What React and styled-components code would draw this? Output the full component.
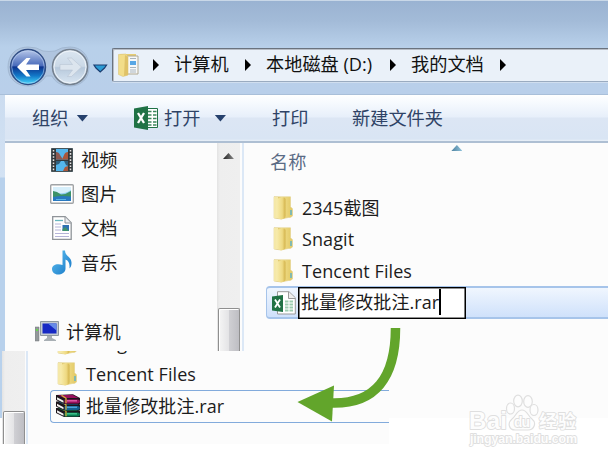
import { Fragment } from "react";
import styled, { createGlobalStyle } from "styled-components";

const GlobalStyle = createGlobalStyle`
  * {
    box-sizing: border-box;
  }

  body {
    margin: 0;
    background: #fff;
    overflow: hidden;
    font-family: "Open Sans", "Noto Sans CJK SC", sans-serif;
    font-size: 18px;
    color: #1c1c1c;
  }

  svg {
    display: block;
    flex: none;
  }
`;

const Page = styled.div`
  position: relative;
  width: 612px;
  height: 461px;
`;

const Window = styled.div`
  display: flex;
  flex-direction: column;
  width: 608px;
  height: 418px;
  background: #b9cfea;
  overflow: hidden;
`;

const NavBar = styled.div`
  display: flex;
  height: 95px;
  padding-top: 48px;
  border-top: 1px solid #c9d8e8;
  border-bottom: 1px solid #a9bfd9;
  background: linear-gradient(#9ab3d2, #a3bbd8 20px, #b8d0ea 46px, #b9cfea);
`;

const NavButtons = styled.div`
  width: 112px;
  margin-top: -4px;
`;

const AddressBar = styled.div`
  flex: 1;
  display: flex;
  align-items: center;
  height: 34px;
  margin-top: -1px;
  padding-left: 5px;
  border: 1px solid #6a737f;
  border-bottom-color: #9aabc0;
  border-right: 0;
  border-radius: 2px 0 0 2px;
  box-shadow: inset 1px 1px #b7bdc6, 0 1px #d0deef;
  background: #eaf1f9;

  svg {
    margin-right: 14px;
  }
`;

const Crumb = styled.span`
  width: ${({ $width }) => $width}px;
  margin: 0 16px 2px 15px;
  line-height: 28px;
  white-space: nowrap;
  font-size: 18.2px;
  color: #111;
`;

const Arrow = styled.i`
  flex: none;
  width: 6px;
  height: 12px;
  background: #000;
  clip-path: polygon(0 0, 100% 50%, 0 100%);
`;

const Body = styled.div`
  flex: 1;
  display: flex;
  flex-direction: column;
  padding-left: 5px;
  background: linear-gradient(
    90deg,
    transparent 5px,
    #fcfcfc 5px
  ), linear-gradient(#cbdcf0, #d3e2f3 82px, #b8d1ec 83px);
`;

const Toolbar = styled.div`
  display: flex;
  align-items: center;
  height: 48px;
  padding-left: 27px;
  border-bottom: 2px solid #aebfd3;
  background: linear-gradient(#fff, #f6fafe 8px, #e7effa 22px, #dce6f4 23px, #d9e5f4 44px, #e9f0f8);
`;

const Command = styled.div`
  display: flex;
  align-items: center;
  width: ${({ $width }) => $width}px;
  line-height: 28px;
  white-space: nowrap;
  font-size: 18.2px;
  color: #2f4366;

  svg {
    margin-right: 6px;
  }
`;

const Caret = styled.i`
  width: 12px;
  height: 7px;
  margin-left: ${({ $gap }) => $gap}px;
  background: #26416d;
  clip-path: polygon(0 0, 100% 0, 50% 100%);
`;

const Panes = styled.div`
  flex: 1;
  display: flex;
`;

const Tree = styled.div`
  flex: 1;
`;

const Sidebar = styled.div`
  display: flex;
  width: 239px;
  height: 208px;
  border-right: 2px solid #dce8f6;
`;

const TreeItem = styled.div`
  display: flex;
  align-items: center;
  gap: 7px;
  height: 34.2px;
  padding-left: 45px;
  line-height: 30px;
  font-size: 18.2px;
`;

const TreeRoot = styled(TreeItem)`
  margin-top: 35px;
  padding-left: 30px;
`;

const ScrollTrack = styled.div`
  display: flex;
  flex-direction: column;
  justify-content: space-between;
  align-items: center;
  width: 23px;
  margin-right: ${({ $gap }) => $gap}px;
  padding-top: 10px;
  background: linear-gradient(90deg, #e3e3e3, #eee 3px, #efefef);
`;

const ScrollUp = styled.i`
  width: 11px;
  height: 6px;
  background: linear-gradient(90deg, #222, #888);
  clip-path: polygon(50% 0, 100% 100%, 0 100%);
`;

const Thumb = styled.div`
  width: 22px;
  height: ${({ $height }) => $height}px;
  border: 1px solid #8f8f8f;
  border-bottom: 0;
  border-radius: 2px 2px 0 0;
  box-shadow: inset 1px 1px #fff;
  background: linear-gradient(90deg, #f5f5f5, #e4e4e6 48%, #cfcfd3 52%, #bebec3);
`;

const Files = styled.div`
  flex: 1;
  padding-left: 22px;
`;

const ColumnHeader = styled.div`
  display: flex;
  align-items: flex-start;
  height: 49px;
  padding-left: 4px;
  line-height: 39px;
  font-size: 18.2px;
  color: #5a6b85;
`;

const SortMark = styled.i`
  width: 11px;
  height: 6px;
  margin: 2px 0 0 145px;
  background: linear-gradient(90deg, #4b7f9d, #8fc1da);
  clip-path: polygon(50% 0, 100% 100%, 0 100%);
`;

const FileRow = styled.div`
  display: flex;
  align-items: center;
  gap: 9px;
  height: 31.5px;
  padding-left: 7px;
  line-height: 30px;
  letter-spacing: 0.08px;
  white-space: nowrap;
`;

const SelectedRow = styled(FileRow)`
  gap: 2px;
  height: 33px;
  margin-top: -0.5px;
  padding-left: 5px;
  border: 1px solid #a6c4ea;
  border-width: 2px 0 2px 1px;
  border-radius: 4px 0 0 4px;
  background: linear-gradient(#f0f6fe, #cfe1fb);
`;

const RenameBox = styled.div`
  display: flex;
  align-items: center;
  width: 168px;
  height: 32px;
  padding: 0 0 2px 2px;
  border: 1px solid #000;
  box-shadow: inset 0 0 0 0.6px #222;
  background: #fff;
`;

const TextCursor = styled.i`
  width: 1.5px;
  height: 26px;
  background: #000;
`;

const Inset = styled.div`
  position: absolute;
  left: 2px;
  top: 351px;
  display: flex;
  width: 387px;
  height: 93px;
  overflow: hidden;
  background: #fcfcfc;
`;

const InsetFiles = styled.div`
  flex: 1;
  display: flex;
  flex-direction: column;
  padding-left: 22px;
  border-left: 2px solid #dce8f6;

  > div {
    flex: none;
  }
`;

const ClippedRow = styled(FileRow)`
  margin-top: -24px;
`;

const OutlinedRow = styled(FileRow)`
  gap: 5px;
  height: 33px;
  padding: 0 0 1px 5px;
  border: 1.5px solid #82abdc;
  border-right: 0;
  border-radius: 4px 0 0 4px;
`;

const CurvedArrow = styled.svg`
  position: absolute;
  left: 295px;
  top: 325px;
`;

const Watermark = styled.svg`
  position: absolute;
  left: 465px;
  top: 390px;

  text {
    font-family: "Liberation Sans", "Noto Sans CJK SC", sans-serif;
    font-weight: bold;
    paint-order: stroke;
    fill: #fdfdfd;
    stroke: #dfdfdf;
    stroke-width: 1.8px;
    stroke-linejoin: round;
  }
`;

const BackForward = () => (
  <svg width="112" height="42" viewBox="0 45 112 42">
    <defs>
      <linearGradient id="back" x2="0" y2="1">
        <stop offset="0" stopColor="#b9c9ea" />
        <stop offset=".46" stopColor="#496bbb" />
        <stop offset=".5" stopColor="#0d348f" />
        <stop offset=".75" stopColor="#1278c8" />
        <stop offset="1" stopColor="#49dcff" />
      </linearGradient>
      <linearGradient id="forward" x2="0" y2="1">
        <stop offset="0" stopColor="#dbe6f1" />
        <stop offset=".48" stopColor="#cbd9e7" />
        <stop offset=".52" stopColor="#b7c9dc" />
        <stop offset="1" stopColor="#dbe7f3" />
      </linearGradient>
    </defs>
    <path
      d="M8 67C8 54 17 47 28 47q9 0 15 4 6 1 12 0 6-4 15-4c11 0 19 8 19 20s-8 19-19 19c-9 0-15-4-18-10h-6c-4 6-10 10-18 10C17 86 8 79 8 67z"
      fill="#b0c5df"
      stroke="#9db2cc"
      strokeWidth=".8"
    />
    <circle cx="28" cy="67" r="17.5" fill="url(#back)" stroke="#304d84" strokeWidth="1.4" />
    <circle cx="28" cy="67" r="16.3" fill="none" stroke="#c5d9f4" strokeOpacity=".55" />
    <path d="M17 67l9.5-9h4l-4.500 6.500H39v5.500H26l4.500 6.500h-4z" fill="#fff" />
    <circle cx="70" cy="67" r="17.5" fill="url(#forward)" stroke="#75818f" strokeWidth="1.5" />
    <circle cx="70" cy="67" r="16" fill="none" stroke="#eff4f9" />
    <path
      d="M81.500 67l-10-9h-4l5 6.500H60v5.500h12.500l-5 6.500h4z"
      fill="#dce5ee"
      stroke="#b8c5d4"
      strokeWidth=".6"
    />
    <path d="M94 65h12.500l-2 3-4.300 4-4.200-4z" fill="#2c9bd4" stroke="#1b3c70" strokeWidth="1.2" />
  </svg>
);

const FolderIcon = () => (
  <svg width="20" height="24" viewBox="0 0 20 24">
    <defs>
      <linearGradient id="flap">
        <stop offset="0" stopColor="#f8ecac" />
        <stop offset=".65" stopColor="#eed982" />
        <stop offset="1" stopColor="#d2b24a" />
      </linearGradient>
      <linearGradient id="folderBack">
        <stop offset="0" stopColor="#c9a83f" />
        <stop offset=".4" stopColor="#f1df8f" />
        <stop offset="1" stopColor="#e2c862" />
      </linearGradient>
    </defs>
    <path d="M1 .8h16.500v10l2 2V20q-2 2-4 1.500L8 23l-7-1z" fill="url(#folderBack)" stroke="#e2d08a" strokeWidth=".6" />
    <path d="M1 1h4v21H1z" fill="#f5e8a8" />
    <path d="M3.500 4q0-1.500 2-1.800L11 1.500q1.500 0 1.500 2V20q0 2-1.500 2.500l-3 1-4.500-2z" fill="url(#flap)" />
    <path d="M18 14v5" stroke="#69b5c2" strokeWidth="1.600" />
  </svg>
);

const OpenFolderIcon = () => (
  <svg width="21" height="24" viewBox="0 0 21 24">
    <path d="M2 1h16v20H4z" fill="#e6cd75" />
    <path d="M9 3h11v18H9z" fill="#f7f8f8" stroke="#b0a992" />
    <path d="M12 8h6v4h-6z" fill="#59a7e5" />
    <path d="M12 5.500h6M12 14.500h6M12 17h6M12 19h6" stroke="#a9b5bf" />
    <path d="M.5 1.500L8 1l2 3v18l-5 1.500-4.500-2z" fill="#f2dd89" stroke="#dcc67a" strokeWidth=".6" />
    <path d="M7 2l3 2v18l-4 1z" fill="#dfc268" />
  </svg>
);

const ExcelIcon = () => (
  <svg width="24" height="24" viewBox="0 0 24 24">
    <path d="M12 2.500h11.500v19H12z" fill="#fff" stroke="#217346" />
    <path d="M14 5.500h3.500M19 5.500h3.500M14 9h3.500M19 9h3.500M14 12.500h3.500M19 12.500h3.500M14 16h3.500M19 16h3.500M14 19h3.500M19 19h3.500" stroke="#3b865c" strokeWidth="1.700" />
    <path d="M0 2.500L14 0v24L0 21.500z" fill="#207245" />
    <path d="M4 7l6 10M10 7L4 17" stroke="#fff" strokeWidth="2.300" />
  </svg>
);

const ExcelFileIcon = () => (
  <svg width="24" height="24" viewBox="0 0 24 24">
    <path d="M5.500.7h11.500l6.300 6V23H5.500z" fill="#fff" stroke="#9a9a9a" />
    <path d="M16.500 1v6.500H23" fill="#eee" stroke="#9a9a9a" />
    <path
      d="M13 10.500h9M13 13.500h9M13 16.500h9M13 19.500h9"
      stroke="#9ccdb0"
      strokeWidth="1.800"
      strokeDasharray="3.500 1"
    />
    <path d="M0 5.500L11 4v17L0 19.500z" fill="#207245" />
    <path d="M3 8.500l5 8M8 8.500l-5 8" stroke="#fff" strokeWidth="1.800" />
  </svg>
);

const VideoIcon = () => (
  <svg width="22" height="24" viewBox="0 0 22 24">
    <path d="M.5.500h21v23H.5z" fill="#34383b" stroke="#47555a" />
    <path d="M5 1h12v10.500H5zM5 13h12v10H5z" fill="#55b6ec" />
    <path d="M5 4q3 0 4 3l3 4.500H5z" fill="#8d5a52" />
    <path d="M17 4q-3 0-4 3l-2 4.500h6z" fill="#a9573c" />
    <path d="M5 13h5l-2 3-3 1zM17 13h-4l2 4 2 1z" fill="#32617e" />
    <path d="M12 23l2-4 3-1v5z" fill="#a9573c" />
    <path d="M2.500 2v21M19.500 2v21" stroke="#e6e6e6" strokeWidth="1.500" strokeDasharray="1.600 1.500" />
  </svg>
);

const PictureIcon = () => (
  <svg width="24" height="20" viewBox="0 0 24 20">
    <rect x=".7" y=".7" width="22.600" height="18.600" rx="1" fill="#fff" stroke="#a0a3a6" strokeWidth="1.400" />
    <path d="M3 3h18v14H3z" fill="#8dccf0" />
    <path d="M3 3h18v3q-7 5-18 3z" fill="#d7effb" />
    <path d="M3 7q4 0 8 3.500 5 0 10-3.500v7H3z" fill="#3d9267" />
    <path d="M3 13q8-1.500 18-.5V17H3z" fill="#2979c0" />
    <path d="M6 15.500h10" stroke="#59b5e4" />
  </svg>
);

const DocumentIcon = () => (
  <svg width="20" height="24" viewBox="0 0 20 24">
    <path d="M.7.700h12.500l6 6V23.300H.7z" fill="#fff" stroke="#8f9499" strokeWidth="1.300" />
    <path d="M13 1v6h6" fill="#eceff2" stroke="#8f9499" />
    <path d="M3 4.500h8" stroke="#66b5bd" strokeWidth="1.300" />
    <path d="M3 8h6M3 11h6M3 14h6M3 17.500h14M3 20.500h14" stroke="#b5b4d8" />
    <path d="M10.500 9H17v6h-6.500z" fill="#2d72b2" />
    <path d="M10.500 13l3-2 3.500 4h-6.500z" fill="#41936d" />
  </svg>
);

const MusicIcon = () => (
  <svg width="20" height="25" viewBox="0 0 20 25">
    <defs>
      <linearGradient id="note" x2="1" y2="1">
        <stop offset="0" stopColor="#62c3f2" />
        <stop offset="1" stopColor="#1475c5" />
      </linearGradient>
    </defs>
    <path
      d="M10.500.5h2.500c0 6 7 6 6.500 13 0 2-1 4-2 5 .5-6-1.500-8-4-9v9c0 4-4 6-7.500 6S0 22 0 19c0-4 5-6 10.500-4z"
      fill="url(#note)"
    />
  </svg>
);

const ComputerIcon = () => (
  <svg width="24" height="21" viewBox="0 0 24 21">
    <path d="M0 6h4v14H0z" fill="#93989a" stroke="#74797c" strokeWidth=".5" />
    <path d="M1 8h2v2H1z" fill="#68d84f" />
    <path d="M5.500.500h18v14h-18z" fill="#c4cbd1" stroke="#8e989f" />
    <path d="M7.500 2.500h14v10h-14z" fill="#1729c4" />
    <path d="M13 2.500h8.500v7z" fill="#668be8" />
    <path d="M12 15h5v2l4 2v1H9v-1l3-2z" fill="#a8afb4" />
  </svg>
);

const books = [
  { y: 13, color: "#0a7d52", light: "#3fc48d" },
  { y: 6.5, color: "#15608f", light: "#4ea2d8" },
  { y: 0, color: "#96105c", light: "#e05aa6" },
];

const RarIcon = () => (
  <svg width="25" height="24" viewBox="0 0 25 24">
    {books.map(({ y, color, light }) => (
      <g key={y} transform={`translate(0 ${y})`}>
        <path d="M0 1L17 .3l7 3.700v6H8L0 6z" fill="#1d161c" />
        <path d="M2 1.300L16.500.8 22.500 4H8z" fill={color} />
        <path d="M1 3.300l6.500 3.500v2L1 5.500z" fill="#f2f2f2" />
        <path d="M8.500 5.500h13q2.500 0 2.500 2t-2.500 2h-13z" fill={color} />
        <path d="M11 6.800h10" stroke={light} strokeWidth="1.500" />
        <path d="M5.500 1.300l4.500 3v5" fill="none" stroke="#d9b53a" strokeWidth="1.200" />
      </g>
    ))}
  </svg>
);

const crumbs = [
  { label: "计算机", width: 55 },
  { label: "本地磁盘 (D:)", width: 108 },
  { label: "我的文档", width: 73 },
];

const libraries = [
  { label: "视频", Icon: VideoIcon },
  { label: "图片", Icon: PictureIcon },
  { label: "文档", Icon: DocumentIcon },
  { label: "音乐", Icon: MusicIcon },
];

const IconSlot = styled.span`
  display: flex;
  justify-content: center;
  width: 24px;
`;

const folders = ["2345截图", "Snagit", "Tencent Files"];

export default function App() {
  return (
    <Page>
      <GlobalStyle />
      <Window>
        <NavBar>
          <NavButtons>
            <BackForward />
          </NavButtons>
          <AddressBar>
            <OpenFolderIcon />
            <Arrow />
            {crumbs.map(({ label, width }) => (
              <Fragment key={label}>
                <Crumb $width={width}>{label}</Crumb>
                <Arrow />
              </Fragment>
            ))}
          </AddressBar>
        </NavBar>

        <Body>
          <Toolbar>
            <Command $width={102}>
              组织
              <Caret $gap={8} />
            </Command>
            <Command $width={138}>
              <ExcelIcon />
              打开
              <Caret $gap={14} />
            </Command>
            <Command $width={80}>打印</Command>
            <Command $width={92}>新建文件夹</Command>
          </Toolbar>

          <Panes>
            <Sidebar>
              <Tree>
                {libraries.map(({ label, Icon }) => (
                  <TreeItem key={label}>
                    <IconSlot>
                      <Icon />
                    </IconSlot>
                    {label}
                  </TreeItem>
                ))}
                <TreeRoot>
                  <ComputerIcon />
                  计算机
                </TreeRoot>
              </Tree>
              <ScrollTrack $gap={2}>
                <ScrollUp />
                <Thumb $height={43} />
              </ScrollTrack>
            </Sidebar>

            <Files>
              <ColumnHeader>
                名称
                <SortMark />
              </ColumnHeader>
              {folders.map((name) => (
                <FileRow key={name}>
                  <FolderIcon />
                  {name}
                </FileRow>
              ))}
              <SelectedRow>
                <ExcelFileIcon />
                <RenameBox>
                  批量修改批注.rar
                  <TextCursor />
                </RenameBox>
              </SelectedRow>
            </Files>
          </Panes>
        </Body>
      </Window>

      <Inset>
        <ScrollTrack $gap={1}>
          <i />
          <Thumb $height={33} />
        </ScrollTrack>
        <InsetFiles>
          <ClippedRow>
            <FolderIcon />
            Snagit
          </ClippedRow>
          <FileRow>
            <FolderIcon />
            Tencent Files
          </FileRow>
          <OutlinedRow>
            <RarIcon />
            批量修改批注.rar
          </OutlinedRow>
        </InsetFiles>
      </Inset>

      <CurvedArrow width="110" height="100" viewBox="295 325 110 100">
        <path d="M395.500 328C395.500 378 375 404 332 403" fill="none" stroke="#62a52b" strokeWidth="9.500" />
        <path d="M297.500 402L334 385.500 332 421.500z" fill="#62a52b" />
      </CurvedArrow>

      <Watermark width="120" height="62" viewBox="465 390 120 62">
        <g fill="#fdfdfd" stroke="#dfdfdf" strokeWidth="1.200">
          <ellipse cx="510.500" cy="408.500" rx="4" ry="5.500" />
          <ellipse cx="518" cy="401" rx="4.300" ry="5.800" />
          <ellipse cx="528" cy="401.500" rx="4.300" ry="5.800" />
          <ellipse cx="534" cy="410" rx="4" ry="5.500" />
          <path d="M522 410c5 0 6 6 10 9 5 4 2 11-4 11h-13c-6 0-8-7-3-11 4-3 5-9 10-9z" />
        </g>
        <text x="469" y="429" fontSize="24" textLength="38">Bai</text>
        <text x="514" y="427" fontSize="14" textLength="16">du</text>
        <text x="539" y="428" fontSize="18" textLength="37">经验</text>
        <text x="470" y="443" fontSize="12.500" textLength="107">jingyan.baidu.com</text>
      </Watermark>
    </Page>
  );
}
